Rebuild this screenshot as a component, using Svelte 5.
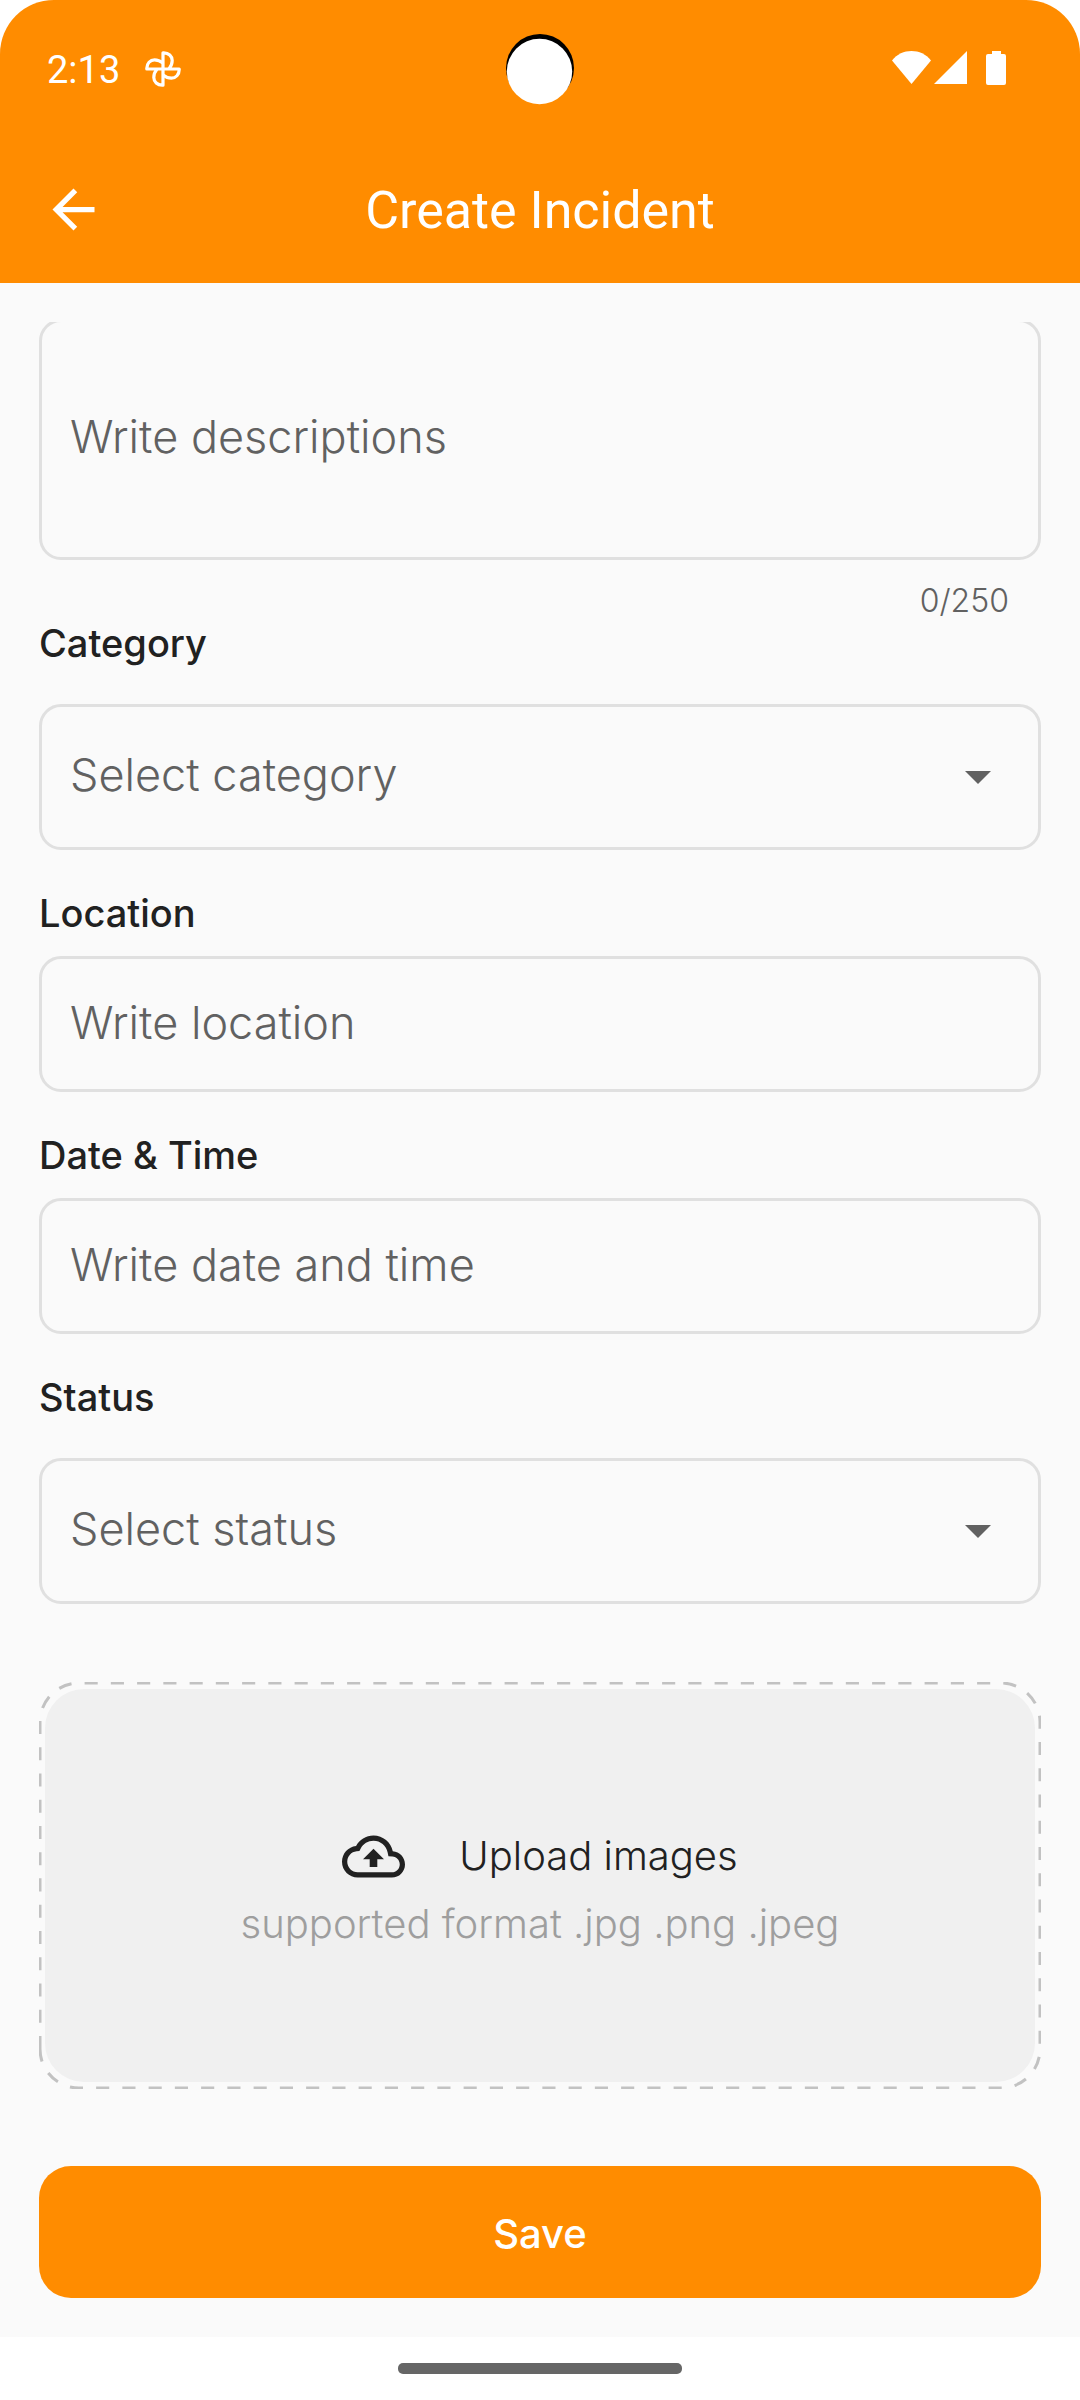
<script>
  const maxLength = 250;
  const categories = ['Fire', 'Theft', 'Accident'];
  const statuses = ['Open', 'In progress', 'Closed'];

  let description = $state('');
  let category = $state('');
  let location = $state('');
  let dateTime = $state('');
  let status = $state('');

  let dropWidth = $state(0);
  let dropHeight = $state(0);

  const radius = 39;
  const inset = 1;

  // Dashed outline, drawn clockwise from the lower left corner.
  const outline = $derived.by(() => {
    const right = Math.max(dropWidth - inset, 2 * radius + inset);
    const bottom = Math.max(dropHeight - inset, 2 * radius + inset);
    const arc = `A${radius} ${radius} 0 0 1`;
    return [
      `M${inset} ${bottom - radius}`,
      `V${inset + radius}`,
      `${arc} ${inset + radius} ${inset}`,
      `H${right - radius}`,
      `${arc} ${right} ${inset + radius}`,
      `V${bottom - radius}`,
      `${arc} ${right - radius} ${bottom}`,
      `H${inset + radius}`,
      `${arc} ${inset} ${bottom - radius}`,
    ].join('');
  });
</script>

{#snippet caret()}
  <svg class="caret" viewBox="0 0 26 13" aria-hidden="true"><path d="M0 0h26L13 13z" /></svg>
{/snippet}

<div class="page">
  <header>
    <div class="status-bar">
      <div class="status-group">
        <span class="clock">2:13</span>
        <svg class="pinwheel" viewBox="-18 -18 36 36" aria-hidden="true">
          <g id="petal">
            <path d="M0 0V-16.200H.8C5.500 -16.200 9.200 -12.800 9.200 -8.500C9.200 -5.500 8 -2.500 6 0" />
          </g>
          <use href="#petal" transform="rotate(90)" />
          <use href="#petal" transform="rotate(180)" />
          <use href="#petal" transform="rotate(270)" />
        </svg>
      </div>
      <svg class="camera" viewBox="0 0 70 72" aria-hidden="true">
        <circle cx="35" cy="35" r="34" fill="#000" />
        <circle cx="34.500" cy="38.500" r="32.700" fill="#fff" />
      </svg>
      <svg class="signals" viewBox="0 0 114 34" aria-hidden="true">
        <path d="M0 9.500C5 3 12 0 19.500 0S34 3 39 9.500L19.500 33z" />
        <path d="M42 33L75 0V33z" />
        <path d="M100 0h9v3h3q2 0 2 2v27q0 2-2 2h-16q-2 0-2-2V5q0-2 2-2h4z" />
      </svg>
    </div>
    <div class="app-bar">
      <button class="back" type="button" aria-label="Back">
        <svg viewBox="0 0 24 24" aria-hidden="true">
          <path d="M20 11H7.830l5.590-5.590L12 4l-8 8 8 8 1.410-1.410L7.830 13H20v-2z" />
        </svg>
      </button>
      <h1>Create Incident</h1>
    </div>
  </header>

  <form onsubmit={(event) => event.preventDefault()}>
    <div class="scroller">
      <textarea
        aria-label="Description"
        placeholder="Write descriptions"
        maxlength={maxLength}
        bind:value={description}
      ></textarea>
      <div class="counter">{description.length}/{maxLength}</div>

      <div class="field roomy">
        <label for="category">Category</label>
        <div class="select-box">
          <select id="category" bind:value={category}>
            <option value="" disabled hidden>Select category</option>
            {#each categories as item}
              <option value={item}>{item}</option>
            {/each}
          </select>
          {@render caret()}
        </div>
      </div>

      <div class="field">
        <label for="location">Location</label>
        <input id="location" type="text" placeholder="Write location" bind:value={location} />
      </div>

      <div class="field">
        <label for="date-time">Date &amp; Time</label>
        <input id="date-time" type="text" placeholder="Write date and time" bind:value={dateTime} />
      </div>

      <div class="field roomy">
        <label for="status">Status</label>
        <div class="select-box">
          <select id="status" bind:value={status}>
            <option value="" disabled hidden>Select status</option>
            {#each statuses as item}
              <option value={item}>{item}</option>
            {/each}
          </select>
          {@render caret()}
        </div>
      </div>

      <button class="upload" type="button" bind:clientWidth={dropWidth} bind:clientHeight={dropHeight}>
        <svg class="outline" aria-hidden="true"><path d={outline} /></svg>
        <span class="upload-area">
          <span class="upload-title">
            <svg class="cloud" viewBox="0 0 24 24" aria-hidden="true">
              <path
                d="M19.350 10.040C18.670 6.590 15.640 4 12 4 9.110 4 6.600 5.640 5.350 8.040 2.340 8.360 0 10.910 0 14c0 3.310 2.690 6 6 6h13c2.760 0 5-2.240 5-5 0-2.640-2.050-4.780-4.650-4.960zM19 18H6c-2.210 0-4-1.790-4-4 0-2.050 1.530-3.760 3.560-3.970l1.070-.11.5-.95C8.080 7.140 9.940 6 12 6c2.620 0 4.880 1.860 5.390 4.430l.3 1.500 1.530.11c1.560.1 2.780 1.410 2.780 2.960 0 1.650-1.350 3-3 3zM8 13h2.550v3h2.900v-3H16l-4-4z"
              />
            </svg>
            Upload images
          </span>
          <span class="upload-hint">supported format .jpg .png .jpeg</span>
        </span>
      </button>

      <button class="save" type="submit">Save</button>
    </div>
  </form>

  <footer><span class="handle"></span></footer>
</div>

<style>
  :global(body) {
    margin: 0;
    background: #fff;
  }

  .page {
    display: flex;
    flex-direction: column;
    min-height: 100vh;
    font-family: Inter, 'Open Sans', sans-serif;
    color: #212121;
  }

  .page :global(*) {
    box-sizing: border-box;
  }

  button,
  input,
  select,
  textarea {
    margin: 0;
    font: inherit;
    color: inherit;
  }

  button {
    padding: 0;
    border: 0;
    background: none;
    cursor: pointer;
  }

  svg {
    display: block;
    flex: none;
  }

  header {
    background: #ff8c00;
    border-radius: 54px 54px 0 0;
    color: #fff;
    font-family: Roboto, sans-serif;
  }

  .status-bar {
    position: relative;
    display: flex;
    justify-content: space-between;
    align-items: center;
    height: 136px;
    padding: 0 74px 0 47px;
  }

  .status-group {
    display: flex;
    align-items: center;
    gap: 25px;
    padding-top: 2px;
  }

  .clock {
    padding-top: 2px;
    font-size: 38px;
    line-height: 44px;
  }

  .pinwheel {
    width: 36px;
    height: 36px;
    fill: none;
    stroke: #fff;
    stroke-width: 3.2;
    stroke-linejoin: round;
  }

  .camera {
    position: absolute;
    top: 33px;
    left: calc(50% - 35px);
    width: 70px;
    height: 72px;
  }

  .signals {
    width: 114px;
    height: 34px;
    fill: #fff;
  }

  .app-bar {
    display: grid;
    grid-template-columns: 63px 1fr 63px;
    align-items: center;
    height: 147px;
    padding: 0 42px;
  }

  .back svg {
    width: 63px;
    height: 63px;
    fill: #fff;
  }

  h1 {
    margin: 0;
    padding-top: 2px;
    font-size: 52px;
    line-height: 64px;
    font-weight: 400;
    text-align: center;
  }

  form {
    flex: 1;
    padding: 39px 0;
    background: #fafafa;
  }

  .scroller {
    display: flex;
    flex-direction: column;
    padding: 0 39px;
    overflow: hidden;
  }

  textarea,
  input,
  select {
    display: block;
    width: 100%;
    border: 3px solid #e0e0e0;
    border-radius: 22px;
    background: transparent;
    font-size: 45px;
    font-weight: 300;
    line-height: 60px;
    color: #616161;
    outline: 0;
  }

  textarea {
    height: 241px;
    margin-top: -3px;
    padding: 85px 28px;
    resize: none;
  }

  ::placeholder {
    color: #616161;
    opacity: 1;
  }

  input {
    height: 136px;
    padding: 0 28px 4px;
  }

  select {
    height: 146px;
    padding: 0 100px 4px 28px;
    appearance: none;
  }

  .select-box {
    display: grid;
    align-items: center;
  }

  .select-box > :global(*) {
    grid-area: 1 / 1;
  }

  .caret {
    justify-self: end;
    width: 26px;
    height: 13px;
    margin-right: 50px;
    fill: #616161;
    pointer-events: none;
  }

  .counter {
    padding: 21px 32px 0;
    height: 60px;
    font-size: 32px;
    font-weight: 300;
    line-height: 40px;
    text-align: right;
    color: #616161;
  }

  .field {
    display: flex;
    flex-direction: column;
    gap: 20px;
  }

  .field.roomy {
    gap: 38px;
  }

  .field + .field {
    margin-top: 40px;
  }

  label {
    font-size: 38px;
    font-weight: 500;
    line-height: 46px;
  }

  .upload {
    position: relative;
    display: flex;
    height: 407px;
    margin-top: 78px;
    padding: 7px 6px;
  }

  .outline {
    position: absolute;
    inset: 0;
    width: 100%;
    height: 100%;
    fill: none;
    stroke: #c2c2c2;
    stroke-width: 3;
    stroke-dasharray: 13.125;
  }

  .upload-area {
    flex: 1;
    display: flex;
    flex-direction: column;
    justify-content: center;
    align-items: center;
    align-self: stretch;
    gap: 13px;
    border-radius: 39px;
    background: #f0f0f0;
    font-size: 40px;
    font-weight: 300;
    line-height: 46px;
  }

  .upload-title {
    display: flex;
    align-items: center;
    gap: 54px;
  }

  .cloud {
    width: 63px;
    height: 63px;
    fill: #212121;
  }

  .upload-hint {
    color: #9e9e9e;
  }

  .save {
    height: 132px;
    margin-top: 77px;
    padding-top: 4px;
    border-radius: 32px;
    background: #ff8c00;
    color: #fff;
    font-size: 40px;
    font-weight: 500;
    line-height: 50px;
  }

  footer {
    display: flex;
    justify-content: center;
    align-items: center;
    height: 63px;
    background: #fff;
  }

  .handle {
    width: 284px;
    height: 11px;
    border-radius: 5px;
    background: #666;
  }
</style>
